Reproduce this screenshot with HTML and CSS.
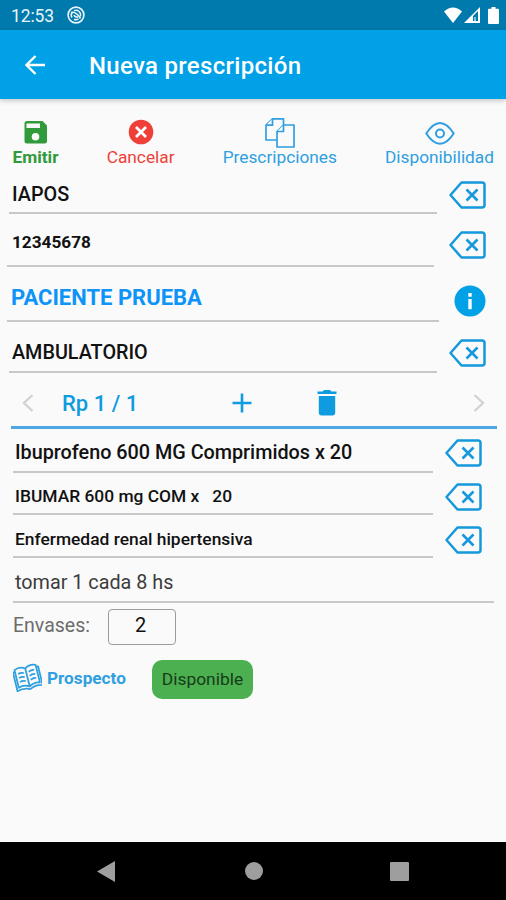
FILE: index.html
```html
<!DOCTYPE html>
<html lang="es">
<head>
<meta charset="utf-8">
<title>Nueva prescripción</title>
<link rel="stylesheet" href="styles.css">
</head>
<body>
<svg class="defs" width="0" height="0" aria-hidden="true">
  <symbol id="clear" viewBox="0 0 37 28">
    <path d="M12.500 1.500H33Q35.500 1.500 35.500 4V24Q35.500 26.500 33 26.500H12.500L1.500 14Z" fill="none" stroke="currentColor" stroke-width="2.500" stroke-linejoin="round"/>
    <path d="M17.500 8.500L28.500 19.500M28.500 8.500L17.500 19.500" stroke="currentColor" stroke-width="2.600"/>
  </symbol>
</svg>
<header class="status">
  <span class="clock">12:53</span>
  <svg class="status-app" viewBox="0 0 18 18"><circle cx="9" cy="9" r="7.900" fill="none" stroke="#e8f4fa" stroke-width="1.700"/><path d="M5 11.500A4.600 4.600 0 0 1 5.500 6M7 4.800A4.600 4.600 0 0 1 13.300 10.500M11.500 12.800A4.600 4.600 0 0 1 7 13.200" fill="none" stroke="#e8f4fa" stroke-width="1.500"/><path d="M4 6.500Q9 5 13.500 12.500M7 9Q8 11.500 11 11" stroke="#e8f4fa" stroke-width="1.700" fill="none"/></svg>
  <span class="spacer"></span>
  <svg class="wifi" viewBox="0 0 18 16"><path d="M9 16L0 4.500Q9-3.500 18 4.500Z" fill="#fff"/></svg>
  <svg class="signal" viewBox="0 0 16 16"><path d="M0 16L16 0V16Z" fill="#fff"/><path d="M9 9L14 4V14H9Z" fill="#0079ad"/><path d="M11 10V14" stroke="#b5dbea" stroke-width="1.500"/></svg>
  <svg class="battery" viewBox="0 0 11 17"><path d="M3.500 0H7.500V1.800H10Q11 1.800 11 3V16Q11 17 10 17H1Q0 17 0 16V3Q0 1.800 1 1.800H3.500Z" fill="#fff"/></svg>
</header>
<div class="appbar">
  <svg class="back" viewBox="0 0 20 20"><path d="M20 10H2M10.500 1L1.500 10l9 9" fill="none" stroke="#fff" stroke-width="2.400"/></svg>
  <h1>Nueva prescripción</h1>
</div>
<main>
  <nav class="actions">
    <div class="action emitir">
      <svg viewBox="0 0 32 32"><path d="M7 5H22.500L27 9.500V25Q27 27.500 24.500 27.500H7Q4.500 27.500 4.500 25V7.500Q4.500 5 7 5Z" fill="currentColor"/><rect x="6.500" y="7.500" width="13.500" height="4.500" fill="#fafafa"/><circle cx="15.500" cy="20.800" r="3.800" fill="#fafafa"/></svg>
      <span>Emitir</span>
    </div>
    <div class="action cancelar">
      <svg viewBox="0 0 32 32"><circle cx="16" cy="16" r="12.300" fill="currentColor"/><path d="M11 11L21 21M21 11L11 21" stroke="#fff" stroke-width="2.800"/></svg>
      <span>Cancelar</span>
    </div>
    <div class="action recetas">
      <svg viewBox="0 0 32 32"><g fill="#fafafa" stroke="currentColor" stroke-width="1.700" stroke-linejoin="round"><path d="M8.500 2.800H19.500V24H2V9.200Z"/><path d="M8.500 2.800V9.200H2"/><path d="M19.500 9H30V31H13V15.500Z"/><path d="M19.500 9V15.500H13"/></g></svg>
      <span>Prescripciones</span>
    </div>
    <div class="action dispo">
      <svg viewBox="0 0 32 32"><path d="M2.300 17.500Q9 7 16 7T29.700 17.500Q23 27.800 16 27.800T2.300 17.500Z" fill="none" stroke="currentColor" stroke-width="2"/><circle cx="16" cy="17.500" r="4" fill="none" stroke="currentColor" stroke-width="2"/></svg>
      <span>Disponibilidad</span>
    </div>
  </nav>

  <div class="row r1"><div class="field"><span>IAPOS</span></div><svg class="clear"><use href="#clear"/></svg></div>
  <div class="row r2"><div class="field"><span>12345678</span></div><svg class="clear"><use href="#clear"/></svg></div>
  <div class="row r3"><div class="field"><span>PACIENTE PRUEBA</span></div>
    <svg class="info" viewBox="0 0 32 32"><circle cx="16" cy="16" r="15.500" fill="currentColor"/><path d="M16 14V24.300M16 8V11.800" stroke="#fff" stroke-width="3.400"/></svg></div>
  <div class="row r4"><div class="field"><span>AMBULATORIO</span></div><svg class="clear"><use href="#clear"/></svg></div>

  <div class="pager">
    <svg class="chev prev" viewBox="0 0 12 18"><path d="M10.500 1L2 9l8.500 8" fill="none" stroke="#d2d2d2" stroke-width="2.300"/></svg>
    <span class="count">Rp 1 / 1</span>
    <svg class="plus" viewBox="0 0 20 20"><path d="M10 0.500V19.500M0.500 10H19.500" stroke="currentColor" stroke-width="2.600"/></svg>
    <svg class="trash" viewBox="0 0 20 26"><path d="M0.500 1.500H5.500L7 0H13L14.500 1.500H19.500V4H0.500Z M1.800 6H18.200V22.500Q18.200 25.500 15.500 25.500H4.500Q1.800 25.500 1.800 22.500Z" fill="currentColor"/></svg>
    <svg class="chev next" viewBox="0 0 12 18"><path d="M1.500 1L10 9l-8.500 8" fill="none" stroke="#d2d2d2" stroke-width="2.300"/></svg>
  </div>

  <div class="row r5"><div class="field"><span>Ibuprofeno 600 MG Comprimidos x 20</span></div><svg class="clear"><use href="#clear"/></svg></div>
  <div class="row r6"><div class="field"><span>IBUMAR 600 mg COM x &nbsp; 20</span></div><svg class="clear"><use href="#clear"/></svg></div>
  <div class="row r7"><div class="field"><span>Enfermedad renal hipertensiva</span></div><svg class="clear"><use href="#clear"/></svg></div>
  <div class="row r8"><div class="field"><span>tomar 1 cada 8 hs</span></div></div>

  <div class="envases"><span class="label">Envases:</span><div class="qty"><span>2</span></div></div>
  <div class="footer-actions">
    <svg class="book" viewBox="0 0 28 28"><g transform="rotate(-14 14 14)" fill="none" stroke="currentColor" stroke-width="1.700" stroke-linejoin="round"><path d="M14 5Q9 1.500 3.500 4V21.500Q9 19.500 14 23Q19 19.500 24.500 21.500V4Q19 1.500 14 5ZV23"/><path d="M3.500 6H1.500V24.500Q8 22.500 14 25.500Q20 22.500 26.500 24.500V6H24.500"/><path d="M6 8.500Q9 7.500 11.500 9M6 12.500Q9 11.500 11.500 13M6 16.500Q9 15.500 11.500 17M16.500 9Q19 7.500 22 8.500M16.500 13Q19 11.500 22 12.500M16.500 17Q19 15.500 22 16.500"/></g></svg>
    <span class="prospecto">Prospecto</span>
    <div class="disponible"><span>Disponible</span></div>
  </div>
</main>
<footer class="navbar">
  <svg class="nav-back" viewBox="0 0 18 21"><path d="M0 10.500L18 0V21Z" fill="#9e9e9e"/></svg>
  <span class="nav-home"></span>
  <span class="nav-recent"></span>
</footer>
</body>
</html>
```
FILE: styles.css
```css
* { box-sizing: border-box; margin: 0; }
body {
  display: flex;
  flex-direction: column;
  width: 506px;
  height: 900px;
  overflow: hidden;
  background: #fafafa;
  color: #1c1c1c;
  font-family: Roboto, sans-serif;
}
svg { display: block; flex: none; }
.defs { display: none; }
.spacer { flex: 1; }
.status {
  display: flex;
  align-items: center;
  height: 30px;
  padding: 0 7px 0 11px;
  background: #0079ad;
  color: #e8f4fa;
}
.clock { font-size: 17.5px; letter-spacing: -.1px; width: 56px; line-height: 30px; padding-top: 2px; }
.status-app { width: 18px; height: 18px; }
.wifi { width: 18px; height: 16px; margin-right: 2px; }
.signal { width: 16px; height: 16px; margin-right: 8px; }
.battery { width: 11px; height: 17px; }
.appbar {
  display: flex;
  align-items: center;
  height: 69px;
  padding-left: 25px;
  background: #00a1e6;
  box-shadow: 0 2px 5px rgba(0, 0, 0, .2);
  color: #fff;
}
.back { width: 20px; height: 20px; margin-right: 44px; }
h1 { font-size: 24px; font-weight: 500; letter-spacing: .3px; line-height: 28px; padding-top: 2px; }
main { flex: 1; display: flex; flex-direction: column; color: #111; }
.actions {
  display: flex;
  justify-content: space-between;
  height: 79px;
  padding: 17px 12px 0 12.5px;
}
.action { display: flex; flex-direction: column; align-items: center; font-size: 17.3px; line-height: 20px; }
.action svg { width: 32px; height: 32px; }
.action span { margin-top: -1px; }
.emitir { color: #319b3b; font-weight: 700; }
.cancelar { color: #ee3f38; }
.recetas, .dispo { color: #2f9fe0; }
.row { display: flex; align-items: flex-start; }
.field { display: flex; align-items: center; height: 100%; border-bottom: 2px solid #c8c8c8; font-weight: 500; white-space: nowrap; }
.clear { width: 37px; height: 28px; color: #1598dc; }
.r1 { height: 36px; padding-left: 9px; }
.r1 .field { width: 428px; font-size: 19.8px; padding: 0 0 2px 3px; }
.r1 .clear { margin: 3px 0 0 12px; }
.r2 { height: 53px; padding-left: 7px; }
.r2 .field { width: 427px; font-size: 17.2px; font-weight: 700; padding: 4px 0 0 5px; }
.r2 .clear { margin: 17px 0 0 15px; }
.r3 { height: 55px; padding-left: 7px; }
.r3 .field { width: 432px; font-size: 22px; font-weight: 700; color: #0e93f8; padding: 8px 0 0 4px; }
.info { width: 32px; height: 32px; margin: 18px 0 0 15px; color: #00a1e6; }
.r4 { height: 51px; padding-left: 9px; }
.r4 .field { width: 428px; font-size: 19.8px; padding: 12px 0 0 3px; }
.r4 .clear { margin: 17px 0 0 12px; }
.pager {
  display: flex;
  align-items: center;
  height: 56px;
  margin: 0 9px 0 11px;
  padding: 6px 12px 0 11px;
  border-bottom: 3px solid #4da8e2;
  color: #0e9be0;
}
.chev { width: 12px; height: 18px; }
.count { width: 170px; margin-left: 28px; padding-top: 2px; font-size: 22px; font-weight: 500; }
.plus { width: 20px; height: 20px; }
.trash { width: 20px; height: 26px; margin-left: 65px; }
.next { margin-left: auto; }
.r5, .r6, .r7, .r8 { padding-left: 13px; }
.r5 .field, .r6 .field, .r7 .field { width: 420px; padding-left: 2px; }
.r5 .clear, .r6 .clear, .r7 .clear { margin-left: 12px; }
.r5 { height: 44px; }
.r5 .field { font-size: 19.8px; padding-top: 4px; }
.r5 .clear { margin-top: 10px; }
.r6 { height: 42px; }
.r6 .field { font-size: 17.4px; padding-top: 6px; }
.r6 .clear { margin-top: 10px; }
.r7 { height: 43px; }
.r7 .field { font-size: 17.4px; padding-top: 6px; }
.r7 .clear { margin-top: 11px; }
.r8 { height: 45px; }
.r8 .field { width: 481px; font-size: 19.8px; font-weight: 400; color: #3c3c3c; padding: 5px 0 0 2px; }
.envases { display: flex; align-items: center; margin: 5px 0 0 13px; height: 37px; }
.label { width: 95px; padding-bottom: 2px; font-size: 19.5px; color: #6c6c6c; }
.qty { display: flex; align-items: center; justify-content: center; width: 68px; height: 36px; padding: 0 3px 4px 0; border: 1px solid #9c9c9c; border-radius: 4px; font-size: 20px; }
.footer-actions { display: flex; align-items: center; height: 40px; margin: 14px 0 0 13px; }
.book { width: 29px; height: 29px; margin-bottom: 3px; color: #2f9fe0; }
.prospecto { width: 105px; margin-left: 5px; padding-bottom: 3px; font-size: 17.2px; font-weight: 700; color: #2f9fe0; }
.disponible { display: flex; align-items: center; justify-content: center; width: 101px; height: 39px; border-radius: 10px; background: #4caf50; color: #173c19; font-size: 17.4px; }
.navbar {
  display: flex;
  align-items: center;
  height: 58px;
  padding-left: 97px;
  background: #000;
}
.nav-back { width: 18px; height: 21px; }
.nav-home { width: 18px; height: 18px; margin-left: 130px; border-radius: 50%; background: #9e9e9e; }
.nav-recent { width: 19px; height: 19px; margin-left: 127px; border-radius: 1px; background: #9e9e9e; }
```
